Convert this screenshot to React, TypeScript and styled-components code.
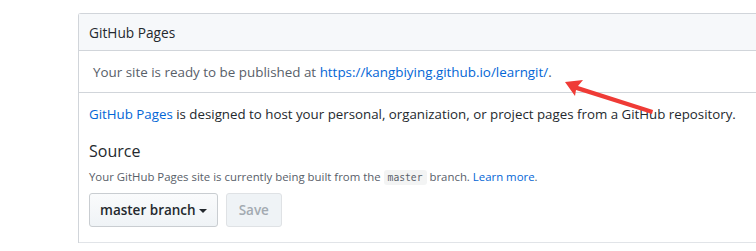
import React from "react";
import styled, { createGlobalStyle } from "styled-components";

const GlobalStyle = createGlobalStyle`
  body {
    margin: 0;
    background: #fff;
    font-family: "Open Sans", "Noto Sans", Arial, sans-serif;
    color: #24292e;
  }
`;

const Page = styled.div`
  position: relative;
  width: 756px;
  height: 251px;
  overflow: hidden;
  padding: 13px 0 0 78px;
  box-sizing: border-box;
`;

const Panel = styled.div`
  width: 720px;
  border: 1px solid #d1d5da;
  border-right: none;
  border-bottom: none;
  border-top-left-radius: 3px;
`;

const Header = styled.div`
  height: 36px;
  display: flex;
  align-items: center;
  padding: 0 10px;
  background: #f6f8fa;
  border-bottom: 1px solid #d1d5da;
  font-size: 13.7px;
`;

const Notice = styled.div`
  height: 41px;
  display: flex;
  align-items: center;
  padding: 0 14px;
  border-bottom: 1px solid #d1d5da;
  font-size: 13.4px;
  color: #586069;
`;

const Body = styled.div`
  padding: 11px 10px 15px;
  border-bottom: 1px solid #e1e4e8;
`;

const Lead = styled.p`
  margin: 0;
  font-size: 13.3px;
  line-height: 20px;
`;

const Link = styled.a`
  color: #0366d6;
  text-decoration: none;
`;

const Heading = styled.h3`
  margin: 15px 0 0;
  font-size: 16px;
  font-weight: 400;
  line-height: 24px;
`;

const Note = styled.p`
  margin: 4px 0 0;
  font-size: 11.4px;
  line-height: 20px;
  color: #586069;
`;

const Code = styled.code`
  font-family: "DejaVu Sans Mono", "Liberation Mono", monospace;
  font-size: 85%;
  padding: 2px 4px;
  background: rgba(27, 31, 35, 0.05);
  border-radius: 3px;
`;

const Actions = styled.div`
  display: flex;
  gap: 8px;
  margin-top: 5px;
`;

const Button = styled.button<{ disabled?: boolean }>`
  height: 34px;
  display: flex;
  align-items: center;
  gap: 3px;
  padding: 0 ${({ disabled }) => (disabled ? "12px" : "10px")};
  font-family: inherit;
  font-size: 13.5px;
  font-weight: 600;
  color: ${({ disabled }) => (disabled ? "#a3aab1" : "#24292e")};
  background: ${({ disabled }) =>
    disabled ? "#eff3f6" : "linear-gradient(#fafbfc, #eff3f6)"};
  border: 1px solid ${({ disabled }) => (disabled ? "#dfe2e5" : "#c9cdd1")};
  border-radius: 3px;
`;

const Caret = styled.span`
  width: 0;
  height: 0;
  border-left: 4px solid transparent;
  border-right: 4px solid transparent;
  border-top: 4px solid #24292e;
  margin-top: 2px;
`;

const Arrow = styled.svg`
  position: absolute;
  left: 0;
  top: 0;
`;

export default function App() {
  return (
    <>
      <GlobalStyle />
      <Page>
        <Panel>
          <Header>GitHub Pages</Header>
          <Notice>
            Your site is ready to be published at&nbsp;
            <Link href="#">https://kangbiying.github.io/learngit/</Link>.
          </Notice>
          <Body>
            <Lead>
              <Link href="#">GitHub Pages</Link> is designed to host your
              personal, organization, or project pages from a GitHub repository.
            </Lead>
            <Heading>Source</Heading>
            <Note>
              Your GitHub Pages site is currently being built from the{" "}
              <Code>master</Code> branch. <Link href="#">Learn more</Link>.
            </Note>
            <Actions>
              <Button>
                master branch <Caret />
              </Button>
              <Button disabled>Save</Button>
            </Actions>
          </Body>
        </Panel>
        <Arrow width="756" height="251" viewBox="0 0 756 251">
          <path d="M565 82 L583 80 L578 86 L653 110 L652 114 L576 90 L575 96 Z" fill="#ef3b36" />
        </Arrow>
      </Page>
    </>
  );
}
